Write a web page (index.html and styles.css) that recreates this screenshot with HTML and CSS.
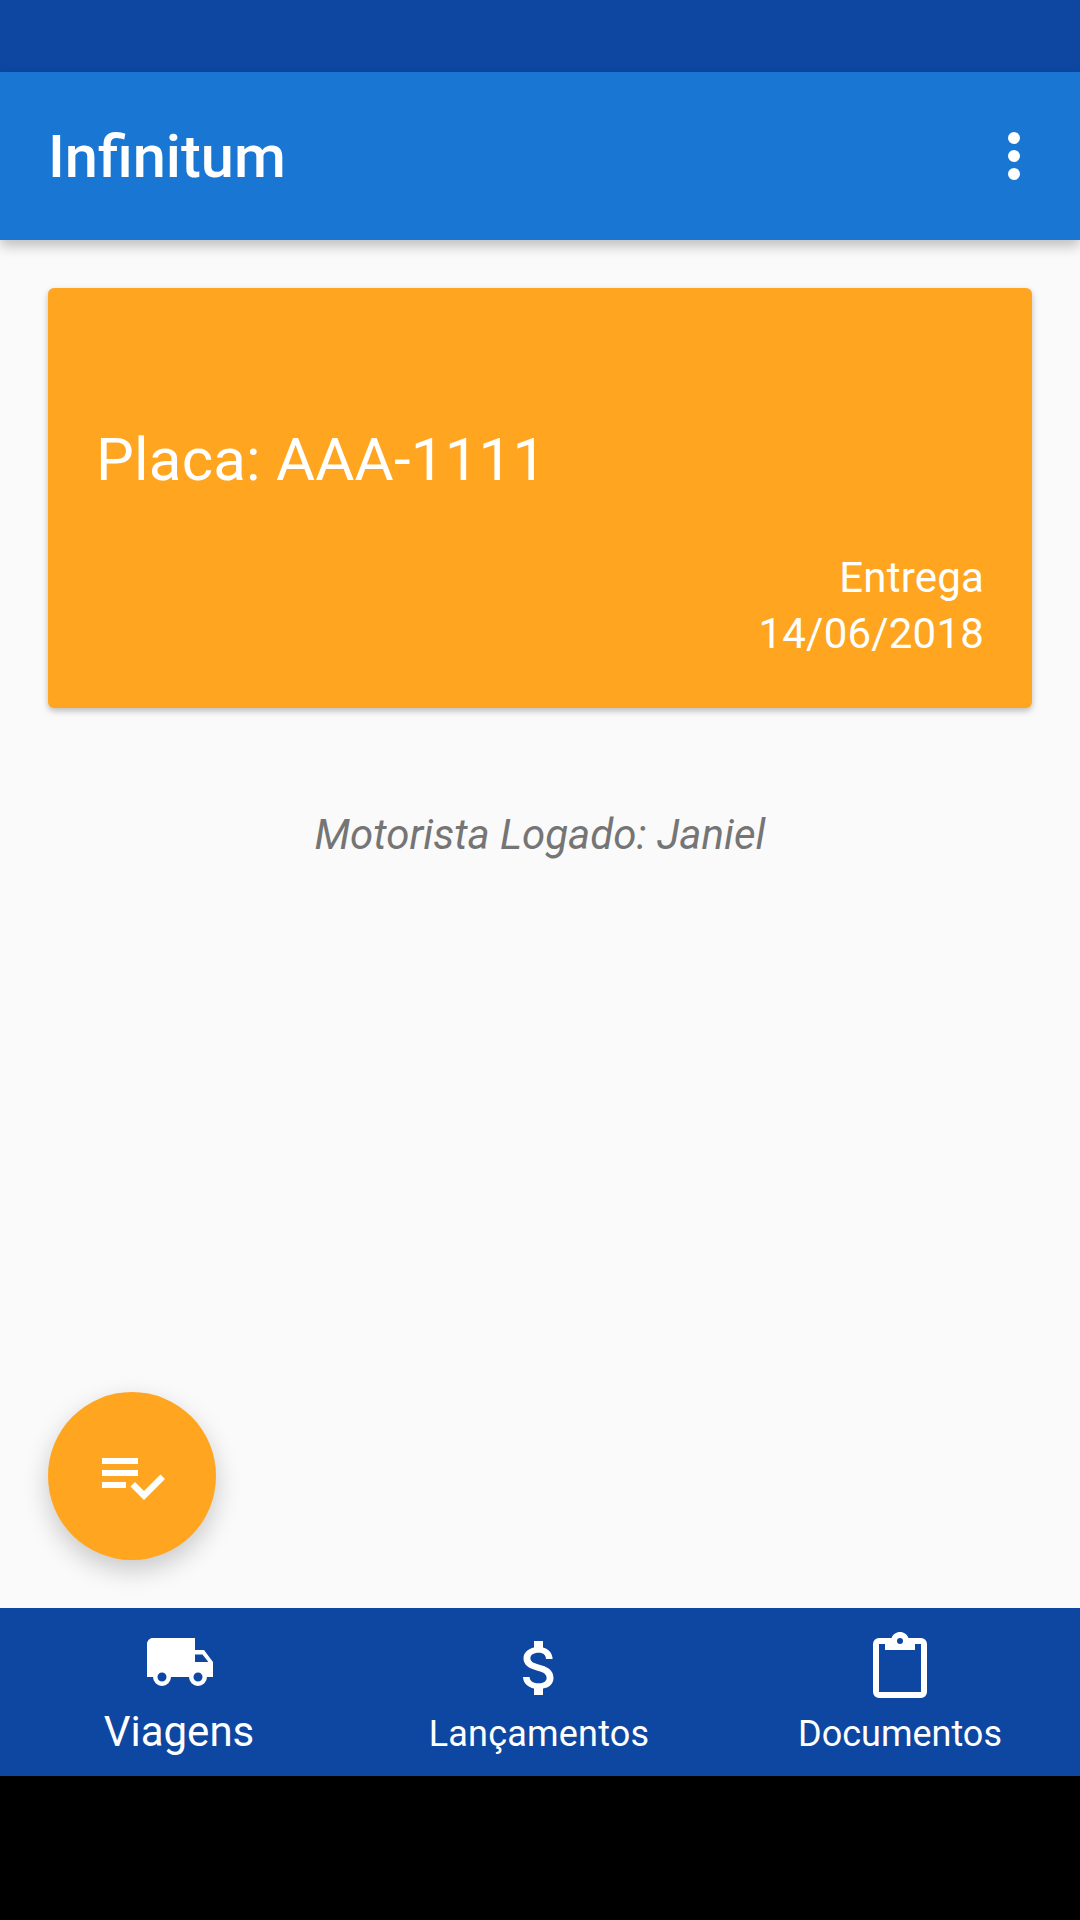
FILE: index.html
```html
<!DOCTYPE html>
<html lang="pt">
<head>
<meta charset="utf-8">
<title>Infinitum</title>
<link rel="stylesheet" href="styles.css">
</head>
<body>
<div class="screen">
  <div class="status-bar"></div>
  <header class="app-bar">
    <h1 class="app-title">Infinitum</h1>
    <svg class="icon" viewBox="0 0 24 24"><path d="M12,16A2,2 0 0,1 14,18A2,2 0 0,1 12,20A2,2 0 0,1 10,18A2,2 0 0,1 12,16M12,10A2,2 0 0,1 14,12A2,2 0 0,1 12,14A2,2 0 0,1 10,12A2,2 0 0,1 12,10M12,4A2,2 0 0,1 14,6A2,2 0 0,1 12,8A2,2 0 0,1 10,6A2,2 0 0,1 12,4Z"/></svg>
  </header>
  <main class="content">
    <section class="trip-card">
      <div class="plate">Placa: AAA-1111</div>
      <div class="delivery">
        <div>Entrega</div>
        <div>14/06/2018</div>
      </div>
    </section>
    <p class="driver">Motorista Logado: Janiel</p>
    <button class="fab" type="button" aria-label="Checklist">
      <svg class="icon" viewBox="0 0 24 24"><path d="M14,10H2V12H14V10M14,6H2V8H14V6M2,16H10V14H2V16M21.5,11.5L23,13L16,20L11.5,15.5L13,14L16,17L21.5,11.5Z"/></svg>
    </button>
  </main>
  <nav class="bottom-nav">
    <div class="nav-item nav-active">
      <svg class="icon" viewBox="0 0 24 24"><path d="M18,18.5A1.5,1.5 0 0,1 16.5,17A1.5,1.5 0 0,1 18,15.5A1.5,1.5 0 0,1 19.5,17A1.5,1.5 0 0,1 18,18.5M19.5,9.5L21.46,12H17V9.5M6,18.5A1.5,1.5 0 0,1 4.5,17A1.5,1.5 0 0,1 6,15.5A1.5,1.5 0 0,1 7.5,17A1.5,1.5 0 0,1 6,18.5M20,8H17V4H3C1.89,4 1,4.89 1,6V17H3A3,3 0 0,0 6,20A3,3 0 0,0 9,17H15A3,3 0 0,0 18,20A3,3 0 0,0 21,17H23V12L20,8Z"/></svg>
      <span class="nav-label">Viagens</span>
    </div>
    <div class="nav-item nav-money">
      <svg class="icon" viewBox="0 0 24 24"><path d="M11.8 10.9c-2.27-.59-3-1.2-3-2.15 0-1.09 1.01-1.85 2.7-1.85 1.78 0 2.44.85 2.5 2.1h2.21c-.07-1.72-1.12-3.3-3.21-3.81V3h-3v2.16c-1.94.42-3.5 1.68-3.5 3.61 0 2.31 1.91 3.46 4.7 4.13 2.5.6 3 1.48 3 2.41 0 .69-.49 1.79-2.7 1.79-2.06 0-2.87-.92-2.98-2.1h-2.2c.12 2.19 1.76 3.42 3.68 3.83V21h3v-2.15c1.95-.37 3.5-1.5 3.5-3.55 0-2.84-2.43-3.81-4.7-4.4z"/></svg>
      <span class="nav-label">Lançamentos</span>
    </div>
    <div class="nav-item nav-docs">
      <svg class="icon" viewBox="0 0 24 24"><path d="M19,3H14.82C14.4,1.84 13.3,1 12,1C10.7,1 9.6,1.84 9.18,3H5A2,2 0 0,0 3,5V21A2,2 0 0,0 5,23H19A2,2 0 0,0 21,21V5A2,2 0 0,0 19,3M12,3A1,1 0 0,1 13,4A1,1 0 0,1 12,5A1,1 0 0,1 11,4A1,1 0 0,1 12,3M7,7H17V5H19V21H5V5H7V7Z"/></svg>
      <span class="nav-label">Documentos</span>
    </div>
  </nav>
  <div class="system-bar"></div>
</div>
</body>
</html>
```
FILE: styles.css
```css
* { box-sizing: border-box; }
html, body { margin: 0; padding: 0; }
body { font-family: Roboto, "Noto Sans", sans-serif; background: #000; }
.screen { width: 1080px; height: 1920px; display: flex; flex-direction: column; overflow: hidden; }
.icon { width: 72px; height: 72px; fill: #fff; display: block; flex: none; }
.status-bar { height: 72px; background: #0d47a1; }
.app-bar { height: 168px; background: #1976d2; display: flex; align-items: center; justify-content: space-between; padding: 0 30px 0 48px; position: relative; z-index: 2; box-shadow: 0 6px 12px rgba(0,0,0,.24); }
.app-title { margin: 0; padding-top: 2px; font-size: 59.5px; font-weight: 500; color: #fff; }
.content { flex: none; height: 1368px; background: #fafafa; padding: 48px; position: relative; }
.trip-card { height: 420px; background: #ffa520; border-radius: 6px; padding: 48px 48px 46px; box-shadow: 0 3px 6px rgba(0,0,0,.25); color: #fff; display: flex; flex-direction: column; justify-content: flex-end; }
.plate { font-size: 60px; line-height: 72px; letter-spacing: 0.2px; margin-bottom: 54px; }
.delivery { font-size: 42px; line-height: 56px; letter-spacing: 0.2px; text-align: right; }
.driver { margin: 99px 0 0; text-align: center; font-size: 42px; font-style: italic; line-height: 56px; color: #757575; }
.fab { position: absolute; left: 48px; bottom: 48px; width: 168px; height: 168px; padding: 48px; border: 0; border-radius: 50%; background: #ffa520; box-shadow: 0 10px 26px rgba(0,0,0,.2); }
.fab .icon { width: 72px; height: 72px; }
.bottom-nav { height: 168px; background: #0d47a1; display: grid; grid-template-columns: repeat(3, 360px); }
.nav-item { display: flex; flex-direction: column; align-items: center; color: #fff; padding-top: 18px; }
.nav-label { font-size: 36px; line-height: 48px; margin-top: 8px; }
.nav-active .nav-label { font-size: 42px; line-height: 56px; margin-top: 6px; padding-right: 2px; }
.nav-money { padding-top: 24px; }
.nav-money .nav-label { margin-top: 6px; letter-spacing: 0.2px; padding-right: 2px; }
.nav-docs { padding-top: 21px; }
.nav-docs .nav-label { margin-top: 9px; }
.system-bar { flex: 1; background: #000; }
```
